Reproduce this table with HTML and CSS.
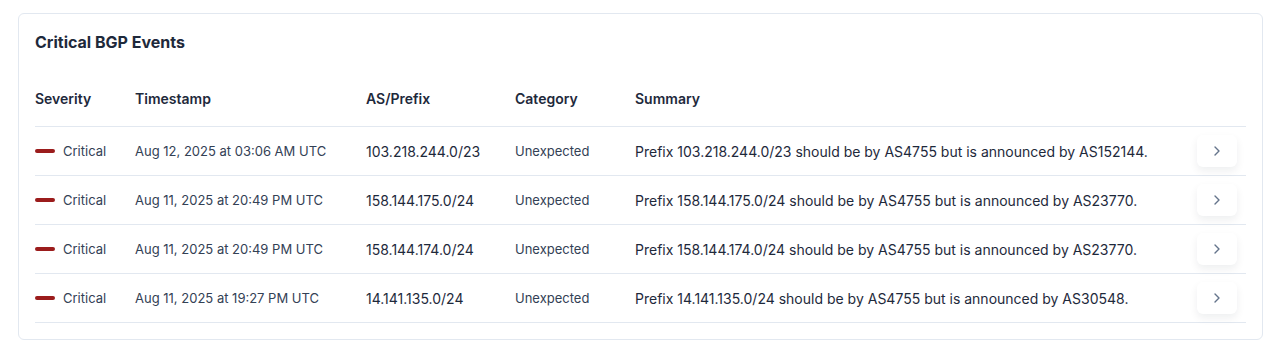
FILE: index.html
```html
<!DOCTYPE html>
<html lang="en">
<head>
<meta charset="utf-8">
<title>Critical BGP Events</title>
<link rel="stylesheet" href="styles.css">
</head>
<body>
<section class="card">
  <h2 class="card-title">Critical BGP Events</h2>
  <div class="table">
    <div class="row head">
      <div class="cell">Severity</div>
      <div class="cell">Timestamp</div>
      <div class="cell">AS/Prefix</div>
      <div class="cell">Category</div>
      <div class="cell">Summary</div>
      <div class="cell"></div>
    </div>
    <div class="row">
      <div class="cell sev"><span class="bar"></span>Critical</div>
      <div class="cell ts">Aug 12, 2025 at 03:06 AM UTC</div>
      <div class="cell pfx">103.218.244.0/23</div>
      <div class="cell cat">Unexpected</div>
      <div class="cell sum">Prefix 103.218.244.0/23 should be by AS4755 but is announced by AS152144.</div>
      <div class="cell act"><button class="chev-btn" aria-label="Open"><svg width="8" height="12" viewBox="0 0 8 12"><path d="M2 2l4 4-4 4" fill="none" stroke="currentColor" stroke-width="1.4" stroke-linecap="round" stroke-linejoin="round"/></svg></button></div>
    </div>
    <div class="row">
      <div class="cell sev"><span class="bar"></span>Critical</div>
      <div class="cell ts">Aug 11, 2025 at 20:49 PM UTC</div>
      <div class="cell pfx">158.144.175.0/24</div>
      <div class="cell cat">Unexpected</div>
      <div class="cell sum">Prefix 158.144.175.0/24 should be by AS4755 but is announced by AS23770.</div>
      <div class="cell act"><button class="chev-btn" aria-label="Open"><svg width="8" height="12" viewBox="0 0 8 12"><path d="M2 2l4 4-4 4" fill="none" stroke="currentColor" stroke-width="1.4" stroke-linecap="round" stroke-linejoin="round"/></svg></button></div>
    </div>
    <div class="row">
      <div class="cell sev"><span class="bar"></span>Critical</div>
      <div class="cell ts">Aug 11, 2025 at 20:49 PM UTC</div>
      <div class="cell pfx">158.144.174.0/24</div>
      <div class="cell cat">Unexpected</div>
      <div class="cell sum">Prefix 158.144.174.0/24 should be by AS4755 but is announced by AS23770.</div>
      <div class="cell act"><button class="chev-btn" aria-label="Open"><svg width="8" height="12" viewBox="0 0 8 12"><path d="M2 2l4 4-4 4" fill="none" stroke="currentColor" stroke-width="1.4" stroke-linecap="round" stroke-linejoin="round"/></svg></button></div>
    </div>
    <div class="row">
      <div class="cell sev"><span class="bar"></span>Critical</div>
      <div class="cell ts">Aug 11, 2025 at 19:27 PM UTC</div>
      <div class="cell pfx">14.141.135.0/24</div>
      <div class="cell cat">Unexpected</div>
      <div class="cell sum">Prefix 14.141.135.0/24 should be by AS4755 but is announced by AS30548.</div>
      <div class="cell act"><button class="chev-btn" aria-label="Open"><svg width="8" height="12" viewBox="0 0 8 12"><path d="M2 2l4 4-4 4" fill="none" stroke="currentColor" stroke-width="1.4" stroke-linecap="round" stroke-linejoin="round"/></svg></button></div>
    </div>
  </div>
</section>
</body>
</html>
```

FILE: styles.css
```css
* { box-sizing: border-box; }

html, body { height: 100%; }

body {
  margin: 0;
  padding: 13px 9px 9px 18px;
  background: #ffffff;
  font-family: Inter, "Noto Sans", sans-serif;
  color: #1e293b;
}

.card {
  border: 1px solid #e2e8f0;
  border-radius: 6px;
  padding: 16px 16px 16px 16px;
  background: #fff;
}

.card-title {
  margin: 0 0 19px 0;
  font-size: 16px;
  line-height: 24px;
  font-weight: 700;
  color: #1e293b;
}

.table { display: flex; flex-direction: column; }

.row {
  display: grid;
  grid-template-columns: 100px 231px 149px 120px 1fr 49px;
  align-items: center;
  height: 49px;
  border-bottom: 1px solid #e2e8f0;
}

.row.head {
  height: 54px;
  align-items: start;
  padding-top: 16px;
}

.head .cell {
  font-size: 14px;
  line-height: 20px;
  font-weight: 600;
  color: #1e293b;
}

.cell {
  font-size: 14px;
  line-height: 20px;
  color: #1e293b;
  white-space: nowrap;
}

.sev {
  display: flex;
  align-items: center;
  gap: 8px;
  font-size: 13px;
  color: #334155;
}

.bar {
  width: 20px;
  height: 4px;
  border-radius: 2px;
  background: #9b1c1c;
}

.ts { font-size: 13px; color: #334155; }
.pfx { font-size: 14px; color: #1e293b; padding-top: 2px; }
.cat { font-size: 13px; color: #334155; }
.sum { font-size: 14px; color: #1e293b; padding-top: 2px; }

.act { display: flex; }

.chev-btn {
  width: 40px;
  height: 32px;
  border: none;
  border-radius: 6px;
  background: #fff;
  color: #64748b;
  display: flex;
  align-items: center;
  justify-content: center;
  box-shadow: 0 4px 8px rgba(15, 23, 42, 0.07);
  padding: 0;
  cursor: pointer;
}
```
